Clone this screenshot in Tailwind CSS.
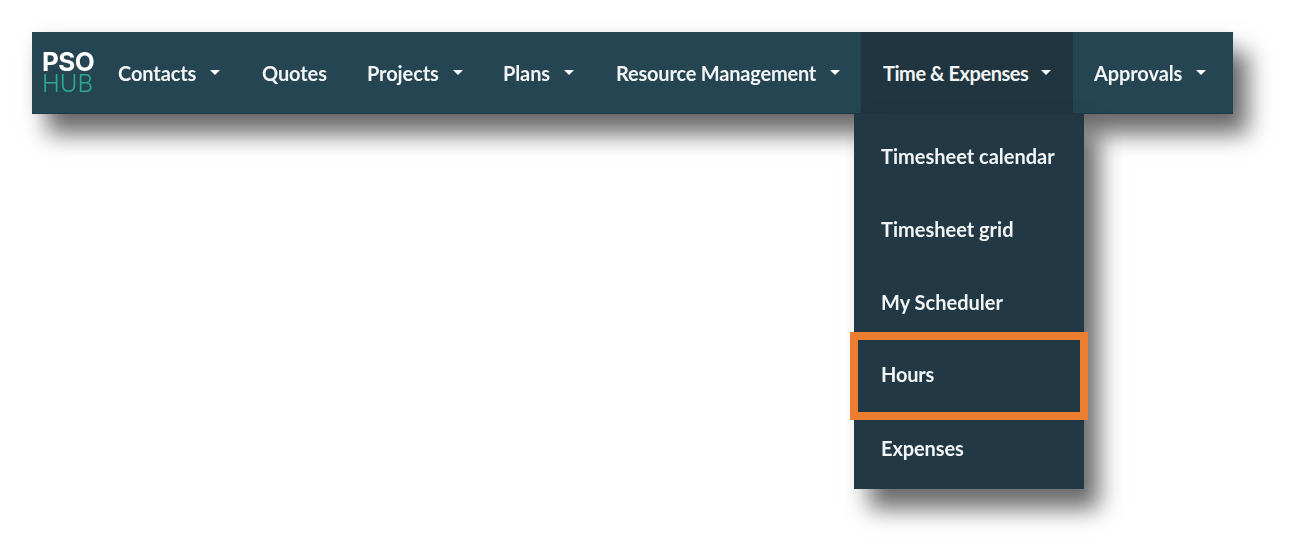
<!DOCTYPE html>
<html lang="en">
<head>
    <meta charset="UTF-8">
    <meta name="viewport" content="width=device-width, initial-scale=1.0">
    <title>PSO Hub menu</title>
    <script src="https://cdn.jsdelivr.net/npm/@tailwindcss/browser@4"></script>
</head>
<body class="min-h-screen bg-white overflow-hidden font-['Lato',sans-serif] text-[20px] font-bold text-[#f2f5f5]">
    <div class="pt-8 pl-8 blur-[0.4px]">
        <nav class="flex w-[1201px] h-[82px] bg-[#264552] border-b border-[#20383f] shadow-[15px_20px_22px_rgba(0,0,0,0.58),0_0_14px_rgba(0,0,0,0.08)]">
            <a class="w-[65px] shrink-0 pl-[10px] pt-[19px] flex flex-col">
                <span class="text-[26px] leading-[22px] font-bold font-['Inter',sans-serif] text-white tracking-[-0.5px]">PSO</span>
                <span class="text-[24px] leading-[21px] font-light font-['Inter',sans-serif] text-[#2aa893]">HUB</span>
            </a>
            <a class="w-[144px] pl-[21px] flex items-center tracking-[-0.1px]">Contacts<span class="ml-[14px] border-x-[5px] border-t-[5px] border-x-transparent border-t-white"></span></a>
            <a class="w-[105px] pl-[21px] flex items-center tracking-[-0.1px]">Quotes</a>
            <a class="w-[137px] pl-[21px] flex items-center tracking-[-0.1px]">Projects<span class="ml-[14px] border-x-[5px] border-t-[5px] border-x-transparent border-t-white"></span></a>
            <a class="w-[113px] pl-[20px] flex items-center tracking-[-0.1px]">Plans<span class="ml-[14px] border-x-[5px] border-t-[5px] border-x-transparent border-t-white"></span></a>
            <a class="w-[265px] pl-[20px] flex items-center tracking-[-0.2px]">Resource Management<span class="ml-[14px] border-x-[5px] border-t-[5px] border-x-transparent border-t-white"></span></a>
            <div class="relative w-[212px] pl-[22px] flex items-center bg-[#20353f]">
                <span class="tracking-[-0.45px]">Time &amp; Expenses</span><span class="ml-[13px] border-x-[5px] border-t-[5px] border-x-transparent border-t-white"></span>
                <div class="absolute left-[-7px] top-[82px] w-[230px] h-[375px] pt-[5px] flex flex-col bg-[#223844] shadow-[15px_20px_22px_rgba(0,0,0,0.58)]">
                    <a class="h-[73.4px] pl-[27px] flex items-center">Timesheet calendar</a>
                    <a class="h-[73.4px] pl-[27px] flex items-center">Timesheet grid</a>
                    <a class="h-[73.4px] pl-[27px] flex items-center">My Scheduler</a>
                    <a class="relative h-[73.4px] pl-[27px] pb-[4px] flex items-center tracking-[-0.2px]">
                        Hours
                        <span class="absolute left-[-4px] top-[-7px] w-[238px] h-[88px] border-[8px] border-[#ed7d31]"></span>
                    </a>
                    <a class="h-[73.4px] pl-[27px] pb-[2px] flex items-center tracking-[-0.1px]">Expenses</a>
                </div>
            </div>
            <a class="pl-[21px] flex items-center tracking-[-0.1px]">Approvals<span class="ml-[14px] border-x-[5px] border-t-[5px] border-x-transparent border-t-white"></span></a>
        </nav>
    </div>
</body>
</html>
